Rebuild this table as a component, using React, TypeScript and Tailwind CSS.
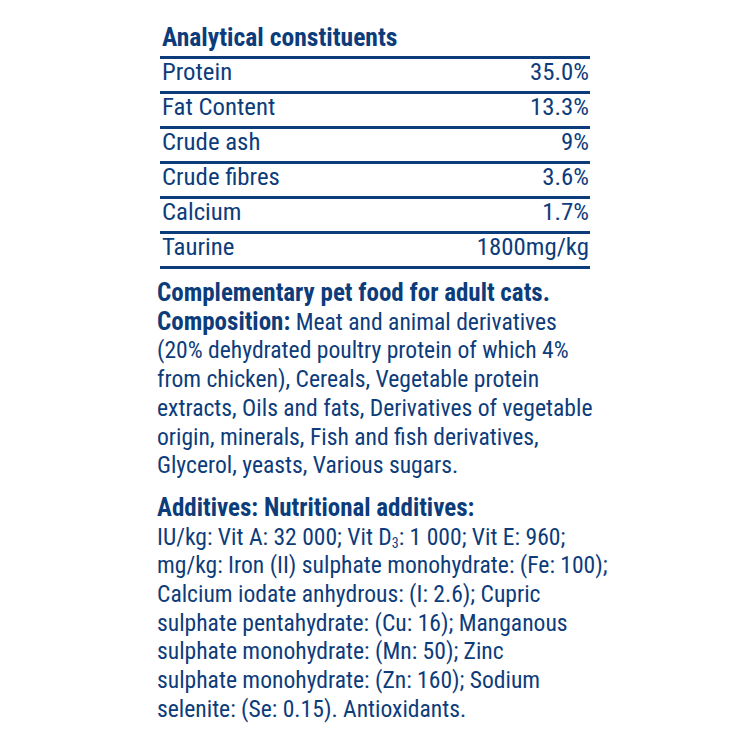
const rows: [string, string][] = [
  ["Protein", "35.0%"],
  ["Fat Content", "13.3%"],
  ["Crude ash", "9%"],
  ["Crude fibres", "3.6%"],
  ["Calcium", "1.7%"],
  ["Taurine", "1800mg/kg"],
];

function B({ children }: { children: React.ReactNode }) {
  return <b className="text-[25px] leading-[20px] font-bold">{children}</b>;
}

export default function App() {
  return (
    <div
      className="w-[750px] h-[750px] bg-white text-[#0d3c7b] overflow-hidden"
      style={{ fontFamily: '"Roboto Condensed", "Liberation Sans", sans-serif' }}
    >
      <div className="ml-[160px] w-[430px] pt-[25px]">
        <h1 className="pl-[2px] h-[31px] text-[25.6px] leading-[24px] font-bold">Analytical constituents</h1>
        <div className="border-b-[3px] border-[#0d3c7b]">
          {rows.map(([k, v]) => (
            <div
              key={k}
              className="flex justify-between items-center h-[35px] border-t-[3px] border-[#0d3c7b] pl-[2px] pr-[1px] pb-[6px] text-[24.8px] leading-[24px]"
            >
              <span>{k}</span>
              <span>{v}</span>
            </div>
          ))}
        </div>
      </div>
      <div className="ml-[157px] w-[460px] text-[23.6px] leading-[28.7px]">
        <p className="mt-[10px]">
          <B>Complementary pet food for adult cats.</B>
          <br />
          <B>Composition:</B> Meat and animal derivatives
          <br />
          (20% dehydrated poultry protein of which 4%
          <br />
          from chicken), Cereals, Vegetable protein
          <br />
          extracts, Oils and fats, Derivatives of vegetable
          <br />
          origin, minerals, Fish and fish derivatives,
          <br />
          Glycerol, yeasts, Various sugars.
        </p>
        <p className="mt-[14px]">
          <B>Additives: Nutritional additives:</B>
          <br />
          IU/kg: Vit A: 32 000; Vit D<sub className="text-[14px]">3</sub>: 1 000; Vit E: 960;
          <br />
          mg/kg: Iron (II) sulphate monohydrate: (Fe: 100);
          <br />
          Calcium iodate anhydrous: (I: 2.6); Cupric
          <br />
          sulphate pentahydrate: (Cu: 16); Manganous
          <br />
          sulphate monohydrate: (Mn: 50); Zinc
          <br />
          sulphate monohydrate: (Zn: 160); Sodium
          <br />
          selenite: (Se: 0.15). Antioxidants.
        </p>
      </div>
    </div>
  );
}
